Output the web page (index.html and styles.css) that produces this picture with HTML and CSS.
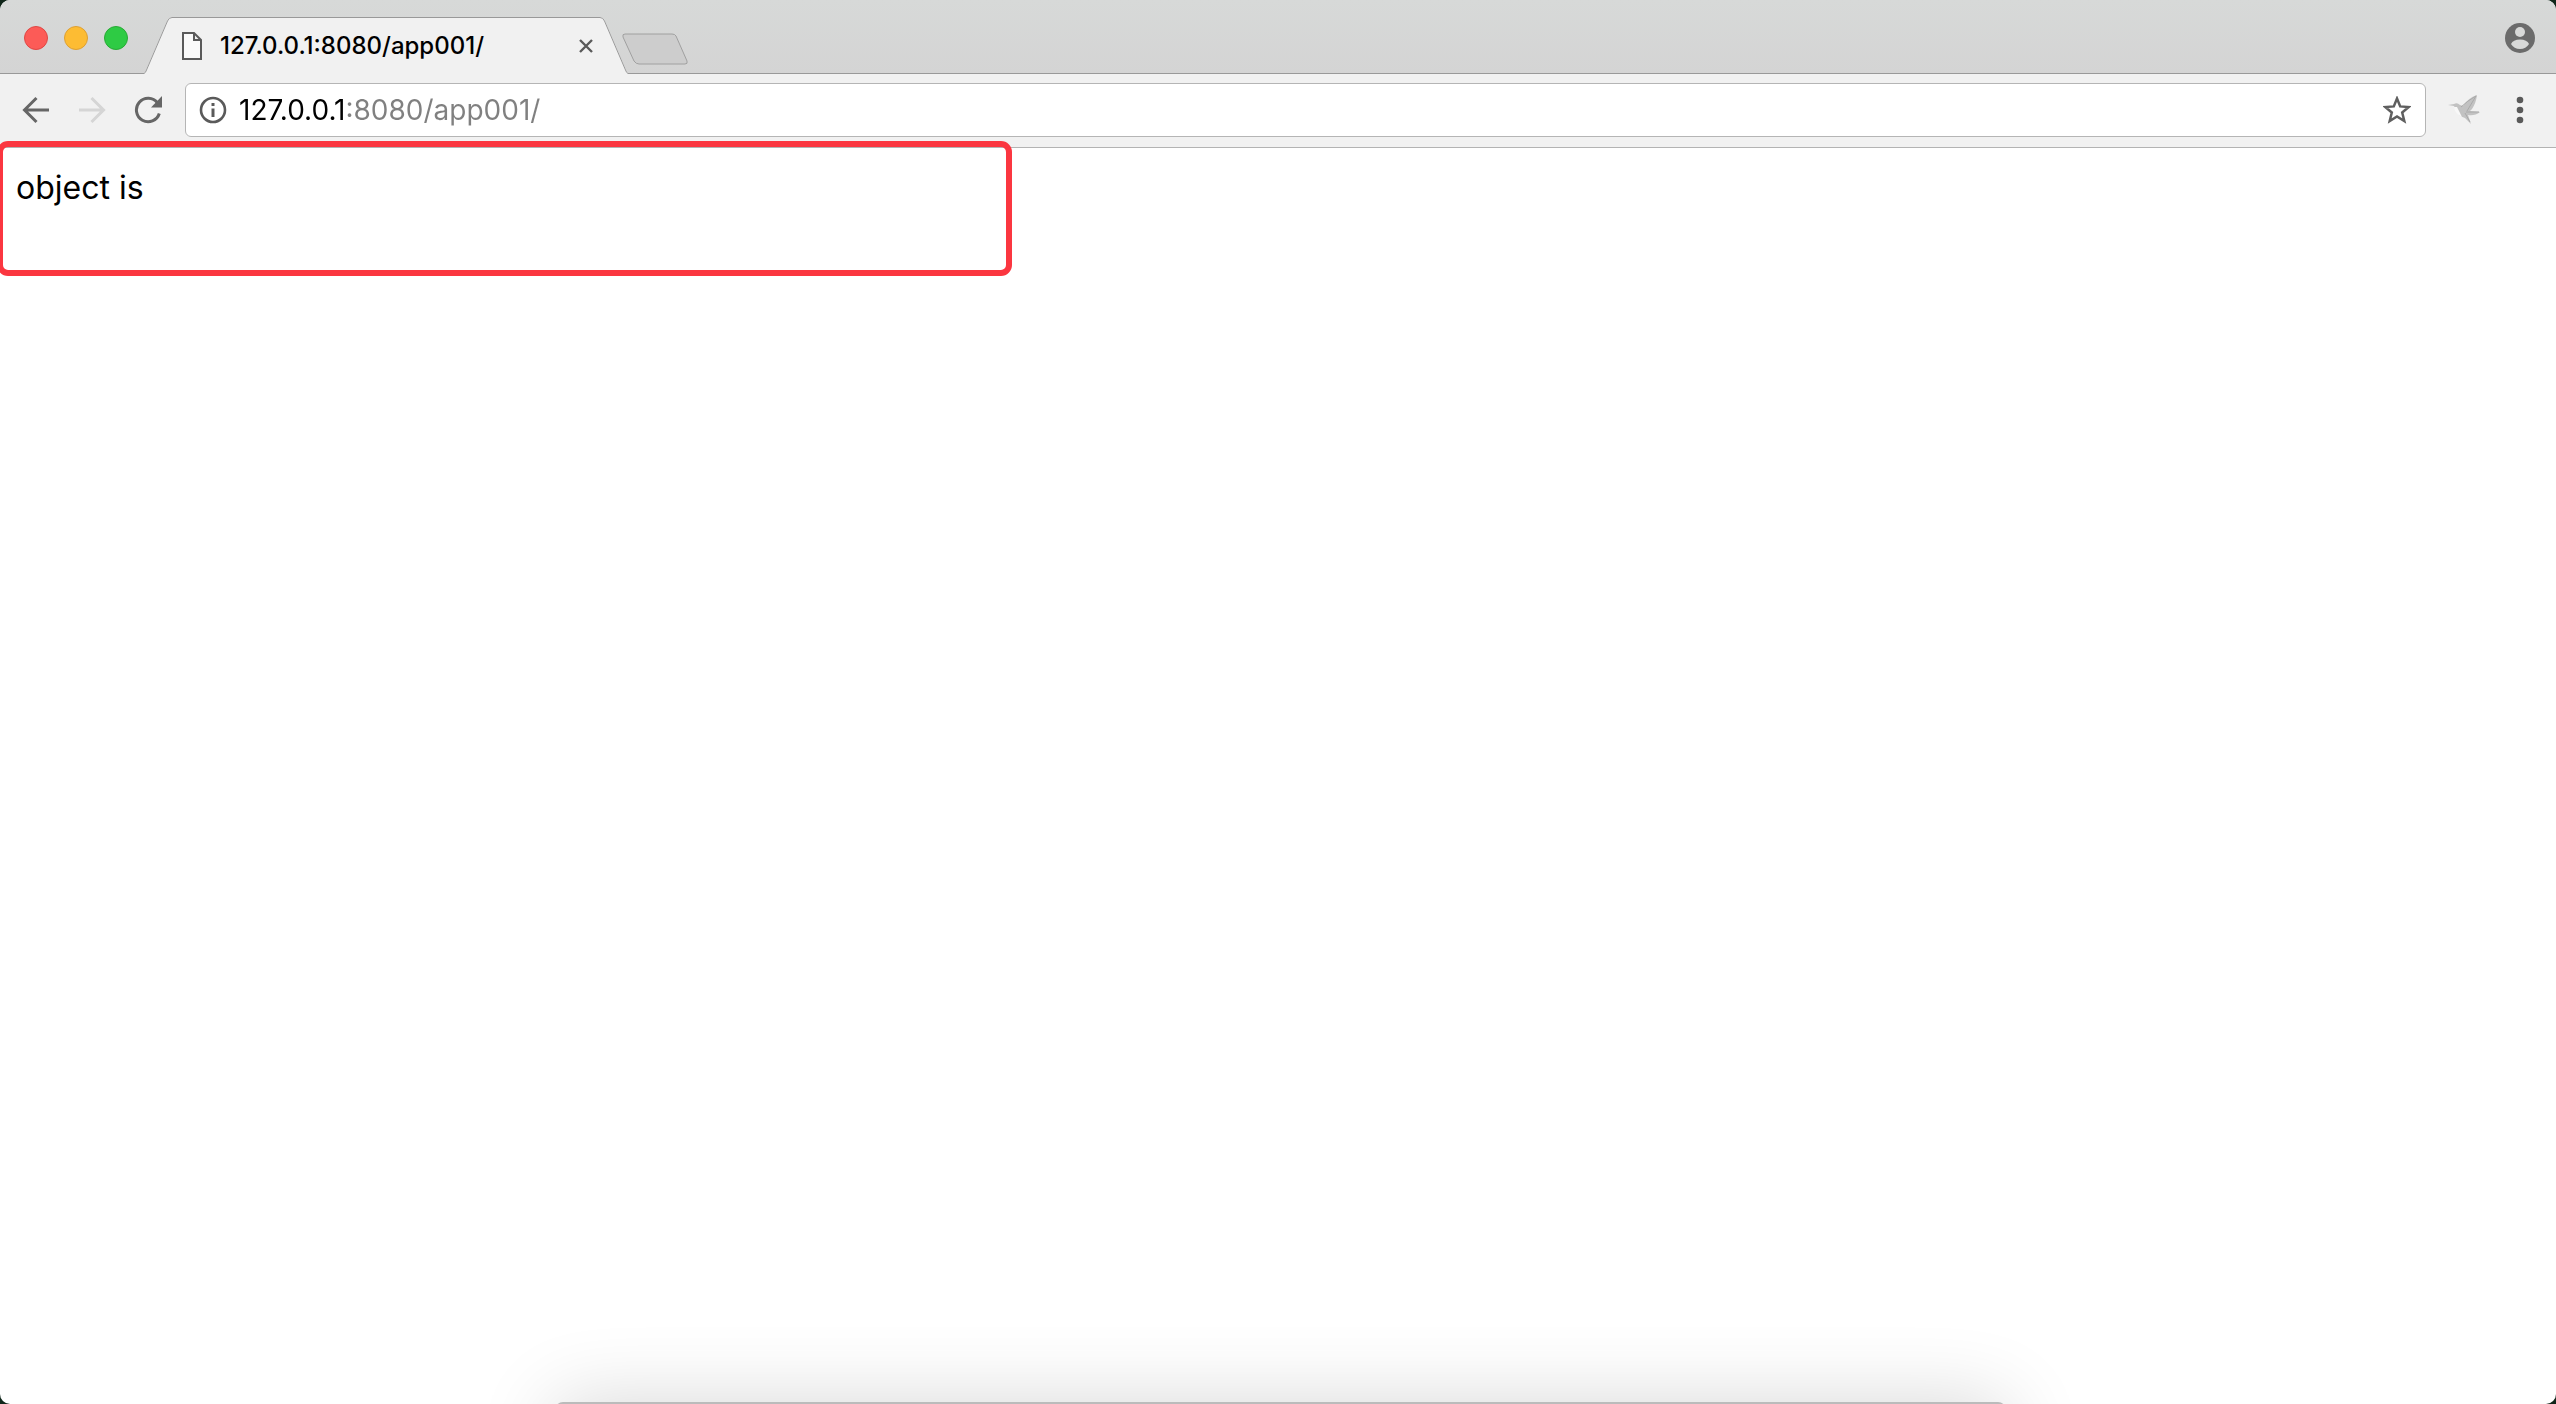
FILE: index.html
```html
<!DOCTYPE html>
<html lang="en">
<head>
<meta charset="utf-8">
<title>127.0.0.1:8080/app001/</title>
<link rel="stylesheet" href="styles.css">
</head>
<body>
<div class="window">
  <header class="tabstrip">
    <div class="lights">
      <button class="light close" aria-label="Close window"></button>
      <button class="light minimize" aria-label="Minimize window"></button>
      <button class="light zoom" aria-label="Zoom window"></button>
    </div>
    <div class="tab">
      <svg class="tab-edge" viewBox="0 0 28 57" aria-hidden="true"><path d="M0 57V56Q1 56 2 53L23 4Q25 0 28 0V57Z" fill="#f1f1f1"/><path d="M0 56.5Q1.500 56 2.500 53L23.500 4Q25 .5 28 .5" fill="none" stroke="#999"/></svg>
      <div class="tab-body">
        <svg class="page-icon" viewBox="0 0 20 28" aria-hidden="true"><path d="M1 1H12L19 8V27H1Z M12 1V8H19" fill="#fafafa" stroke="#5a5a5a" stroke-width="2"/></svg>
        <span class="tab-title">127.0.0.1:8080/app001/</span>
        <button class="tab-close" aria-label="Close tab"><svg viewBox="0 0 16 16"><path d="M2 2L14 14M14 2L2 14" stroke="#5a5a5a" stroke-width="2.400"/></svg></button>
      </div>
      <svg class="tab-edge" viewBox="0 0 28 57" aria-hidden="true"><path d="M28 57V56Q27 56 26 53L5 4Q3 0 0 0V57Z" fill="#f1f1f1"/><path d="M28 56.5Q26.500 56 25.500 53L4.500 4Q3 .5 0 .5" fill="none" stroke="#999"/></svg>
    </div>
    <button class="new-tab" aria-label="New tab"><svg viewBox="0 0 66 32"><path d="M3 1H50Q53 1 54 3L65 28Q66 31 63 31H17Q14 31 12 28L1 4Q0 1 3 1Z" fill="#cdcdcd" stroke="#a0a0a0"/></svg></button>
    <button class="profile" aria-label="Profile"><svg viewBox="0 0 30 30"><circle cx="15" cy="15" r="15" fill="#6b6b6b"/><circle cx="15" cy="9" r="5" fill="#d8d9d8"/><path d="M6 21Q8 16.500 15 16.500T24 21Q21 26 15 26T6 21Z" fill="#d8d9d8"/></svg></button>
  </header>
  <nav class="toolbar">
    <button class="tool" aria-label="Back"><svg viewBox="0 0 28 28"><path d="M27 14H3M14.500 2L2.500 14L14.500 26" fill="none" stroke="#666" stroke-width="3"/></svg></button>
    <button class="tool" aria-label="Forward" disabled><svg viewBox="0 0 28 28"><path d="M1 14H25M13.500 2L25.500 14L13.500 26" fill="none" stroke="#d5d5d5" stroke-width="3"/></svg></button>
    <button class="tool" aria-label="Reload"><svg viewBox="0 0 28 28"><path d="M23.500 7A11.700 11.700 0 1 0 25.300 17.500" fill="none" stroke="#666" stroke-width="3"/><path d="M28 0V11.500H17Z" fill="#666"/></svg></button>
    <form class="omnibox">
      <button type="button" class="tool" aria-label="Site information"><svg viewBox="0 0 28 28"><circle cx="14" cy="14" r="12" fill="none" stroke="#5a5a5a" stroke-width="2.600"/><path d="M12.500 7H15.500V10H12.500ZM12.500 12.500H15.500V21H12.500Z" fill="#5a5a5a"/></svg></button>
      <input class="address" type="text" aria-label="Address" value="127.0.0.1:8080/app001/">
      <button type="button" class="tool" aria-label="Bookmark this page"><svg viewBox="0 0 28 28"><path d="M14 2.500L17.200 10.400L25.700 11L19.200 16.500L21.300 25L14 20.400L6.700 25L8.800 16.500L2.300 11L10.800 10.400Z" fill="none" stroke="#5f5f5f" stroke-width="2.500"/></svg></button>
    </form>
    <button class="extension" aria-label="Extension"><svg viewBox="0 0 32 32"><path d="M0 11L6 10Q9 8 12 11L15 12Q20 4 29 1Q28 9 24 15L22 17L32 18Q27 22 20 21L23 30L17 24Q10 22 8 16L6 12Z" fill="#c2c2c2"/><path d="M13 13Q19 7 28 2L19 17M18 18L31 18M17 19L22 28" fill="none" stroke="#aaa"/><path d="M6 13Q7 20 14 23Q11 17 9 13Z" fill="#f8f8f8"/></svg></button>
    <button class="menu" aria-label="Menu"><svg viewBox="0 0 8 28"><circle cx="4" cy="4" r="3.300"/><circle cx="4" cy="14" r="3.300"/><circle cx="4" cy="24" r="3.300"/></svg></button>
  </nav>
  <main class="page">
    <p class="message">object is</p>
    <div class="highlight"></div>
  </main>
  <div class="dock-shadow"></div>
</div>
</body>
</html>
```
FILE: styles.css
```css
* {
  box-sizing: border-box;
}

body {
  margin: 0;
  background: #10261a;
  font-family: Inter, "Liberation Sans", sans-serif;
}

button {
  padding: 0;
  border: 0;
  background: none;
  flex: none;
}

svg {
  display: block;
}

.window {
  position: relative;
  display: flex;
  flex-direction: column;
  min-height: 100vh;
  overflow: hidden;
  border-radius: 10px;
  background: #fff;
}

.tabstrip {
  display: flex;
  align-items: flex-end;
  height: 74px;
  padding-right: 21px;
  background: linear-gradient(#d7d9d8, #d4d4d4);
  box-shadow: inset 0 -1px #999;
}

.lights {
  display: flex;
  gap: 16px;
  padding: 0 16px 24px 24px;
}

.light {
  width: 24px;
  height: 24px;
  border: 1px solid;
  border-radius: 50%;
}

.close {
  background: #fc5b57;
  border-color: #df4744;
}

.minimize {
  background: #fdbc33;
  border-color: #dda034;
}

.zoom {
  background: #2ecb44;
  border-color: #28aa35;
}

.tab {
  display: flex;
  width: 484px;
  height: 57px;
}

.tab-edge {
  flex: none;
  width: 28px;
  height: 57px;
}

.tab-body {
  display: flex;
  flex: 1;
  align-items: center;
  padding: 0 6px 0 10px;
  border-top: 1px solid #999;
  background: #f1f1f1;
}

.page-icon {
  width: 20px;
  height: 28px;
}

.tab-title {
  flex: 1;
  margin-left: 18px;
  font-size: 24px;
  font-weight: 500;
  line-height: 32px;
  color: #000;
}

.tab-close svg {
  width: 16px;
  height: 16px;
}

.new-tab {
  margin: 0 auto 9px -6px;
}

.new-tab svg {
  width: 66px;
  height: 32px;
}

.profile {
  margin-bottom: 21px;
}

.profile svg {
  width: 30px;
  height: 30px;
}

.toolbar {
  display: flex;
  align-items: center;
  height: 74px;
  padding: 0 32px 2px 22px;
  border-bottom: 1px solid #b3b3b3;
  background: #f1f1f1;
}

.tool {
  margin-right: 28px;
}

.tool svg {
  width: 28px;
  height: 28px;
}

.omnibox {
  display: flex;
  flex: 1;
  align-items: center;
  height: 54px;
  margin: 0 22px 0 -5px;
  padding: 0 14px 0 13px;
  border: 1px solid #b5b5b5;
  border-radius: 6px;
  background: #fff;
}

.omnibox .tool {
  margin: 0;
}

.address {
  flex: 1;
  min-width: 0;
  height: 40px;
  margin-left: 12px;
  padding: 0;
  border: 0;
  outline: 0;
  font: 28px/40px Inter, "Liberation Sans", sans-serif;
  color: transparent;
  background: linear-gradient(to right, #000 106px, #808080 106px);
  background-clip: text;
  -webkit-background-clip: text;
}

.extension svg {
  width: 32px;
  height: 32px;
}

.menu {
  margin-left: 36px;
}

.menu svg {
  width: 8px;
  height: 28px;
  fill: #5a5a5a;
}

.page {
  position: relative;
  flex: 1;
  padding: 16px;
}

.message {
  margin: 0;
  font-size: 32px;
  line-height: 48px;
  color: #000;
}

.highlight {
  position: absolute;
  top: -7px;
  left: -3px;
  width: 1015px;
  height: 135px;
  border: 6px solid #fb3640;
  border-radius: 11px;
}

.dock-shadow {
  position: absolute;
  bottom: -198px;
  left: 21.7%;
  right: 21.5%;
  height: 200px;
  border-radius: 8px;
  background: #bbb;
  box-shadow: 0 0 80px rgba(0, 0, 0, 0.16);
}
```
